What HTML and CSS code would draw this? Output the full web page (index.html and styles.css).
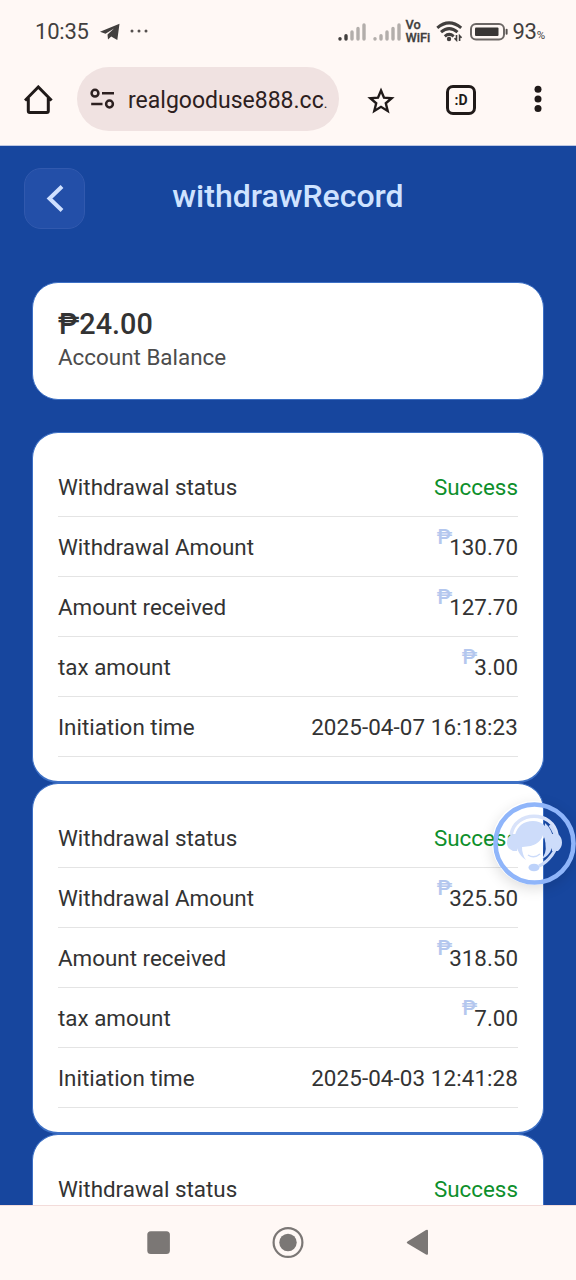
FILE: index.html
```html
<!DOCTYPE html>
<html lang="en">
<head>
<meta charset="utf-8">
<title>withdrawRecord</title>
<link rel="stylesheet" href="styles.css">
</head>
<body>
<div class="phone">
  <header class="status-bar">
    <span class="clock">10:35</span>
    <svg class="telegram" width="20" height="18" viewBox="0 0 20 18"><path d="M0 8.800 19.500 .8 17.300 17 11.200 13.500 8 16.500 7.500 11.500 14 5.500 5.500 10.700Z" fill="#423f3e"/></svg>
    <svg class="ellipsis" width="18" height="4" viewBox="0 0 18 4" fill="#55504e"><circle cx="2" cy="2" r="1.500"/><circle cx="9" cy="2" r="1.500"/><circle cx="16" cy="2" r="1.500"/></svg>
    <div class="indicators">
      <svg class="signal" width="28" height="18" viewBox="0 0 28 18"><g stroke-width="3.400" stroke-linecap="round"><path stroke="#423f3e" d="M2 15.600v.4M8 12.700v3.300"/><path stroke="#b3aeab" d="M14 9v7M20 5.500v10.500M26 2v14"/></g></svg>
      <svg class="signal-two" width="28" height="18" viewBox="0 0 28 18"><path stroke-width="3.400" stroke-linecap="round" stroke="#b3aeab" d="M2 15.600v.4M8 12.700v3.300M14 9v7M20 5.500v10.500M26 2v14"/></svg>
      <span class="vowifi"><span>Vo</span><span>WiFi</span></span>
      <svg class="wifi" width="27" height="21" viewBox="0 0 27 21"><g fill="none" stroke="#423f3e" stroke-width="3"><path d="M1.300 6.800Q13 -3 25.200 6.800"/><path d="M5 11.200Q13.200 4 21.500 11.200"/><path d="M8.800 15.300Q13.200 11.500 17.700 15.300"/></g><circle cx="13" cy="18" r="2.200" fill="#423f3e"/><path d="M20.500 14v5.200l-2-2M23.600 20v-5.200l2 2" fill="none" stroke="#423f3e" stroke-width="1.600"/></svg>
      <svg class="battery" width="38" height="18" viewBox="0 0 38 18"><rect x="1" y="1" width="33" height="15.600" rx="5" fill="none" stroke="#6c6765" stroke-width="2"/><rect x="5" y="4.500" width="23.500" height="8.600" rx="1" fill="#393635"/><path d="M36.600 6.800v4" stroke="#55504e" stroke-width="2" stroke-linecap="round"/></svg>
      <span class="percent">93<small>%</small></span>
    </div>
  </header>
  <nav class="browser-bar">
    <svg class="home" width="30" height="30" viewBox="0 0 30 30"><path d="M1 15.500 14.300 2 27.600 15.500M4.300 13V26Q4.300 27.500 5.800 27.500H22.800Q24.300 27.500 24.300 26V13" fill="none" stroke="#201a19" stroke-width="3"/></svg>
    <div class="address">
      <svg width="26" height="22" viewBox="0 0 26 22"><g fill="none" stroke="#2c2020" stroke-width="2.500"><circle cx="5" cy="5.200" r="3.400"/><path d="M12 5.200H24M1.200 16H12.500"/><circle cx="19.500" cy="16" r="3.400"/></g></svg>
      <span class="url">realgooduse888.cc<small>.</small></span>
    </div>
    <svg class="star" width="28" height="28" viewBox="0 0 28 28"><path d="M14 3.500 17 10.600 24.700 11.200 18.800 16.300 20.700 23.900 14 19.800 7.300 23.900 9.200 16.300 3.300 11.200 11 10.600Z" fill="none" stroke="#201a19" stroke-width="2.400"/></svg>
    <span class="tabs">:D</span>
    <svg class="more" width="8" height="28" viewBox="0 0 8 28" fill="#201a19"><circle cx="4" cy="4.300" r="3.500"/><circle cx="4" cy="14" r="3.500"/><circle cx="4" cy="23.500" r="3.500"/></svg>
  </nav>
  <main class="page">
    <div class="page-header">
      <div class="back"><svg width="20" height="30" viewBox="0 0 20 30"><path d="M17 2.500 4.500 14.500 17 26.500" fill="none" stroke="#cfe0ff" stroke-width="4"/></svg></div>
      <h1 class="title">withdrawRecord</h1>
    </div>
    <section class="balance">
      <div class="balance-value">₱24.00</div>
      <div class="balance-label">Account Balance</div>
    </section>
    <section class="record">
      <div class="row"><span>Withdrawal status</span><span class="success">Success</span></div>
      <div class="row"><span>Withdrawal Amount</span><span class="amount"><i>₱</i>130.70</span></div>
      <div class="row"><span>Amount received</span><span class="amount"><i>₱</i>127.70</span></div>
      <div class="row"><span>tax amount</span><span class="amount"><i>₱</i>3.00</span></div>
      <div class="row"><span>Initiation time</span><span class="time">2025-04-07 16:18:23</span></div>
    </section>
    <section class="record">
      <div class="row"><span>Withdrawal status</span><span class="success">Success</span></div>
      <div class="row"><span>Withdrawal Amount</span><span class="amount"><i>₱</i>325.50</span></div>
      <div class="row"><span>Amount received</span><span class="amount"><i>₱</i>318.50</span></div>
      <div class="row"><span>tax amount</span><span class="amount"><i>₱</i>7.00</span></div>
      <div class="row"><span>Initiation time</span><span class="time">2025-04-03 12:41:28</span></div>
    </section>
    <section class="record">
      <div class="row"><span>Withdrawal status</span><span class="success">Success</span></div>
    </section>
  </main>
  <footer class="system-nav">
    <svg width="24" height="24" viewBox="0 0 24 24"><rect x="1.300" y=".3" width="22.600" height="22.600" rx="3.500" fill="#7b7775"/></svg>
    <svg width="32" height="32" viewBox="0 0 32 32"><circle cx="16" cy="15.500" r="14.400" fill="none" stroke="#7b7775" stroke-width="2.200"/><circle cx="16" cy="15.500" r="8.700" fill="#7b7775"/></svg>
    <svg width="24" height="28" viewBox="0 0 24 28"><path d="M2.500 12.500 21 1Q23 0 23 2V24.500Q23 26.500 21 25.500L2.500 14.500Q.8 13.500 2.500 12.500Z" fill="#7b7775"/></svg>
  </footer>
  <div class="support">
    <svg width="84" height="84" viewBox="0 0 84 84">
      <path d="M24 26H51V62H30Q24 50 24 26Z" fill="#fff"/>
      <circle cx="42.500" cy="42.500" r="39" fill="none" stroke="#8fb5fa" stroke-width="4.600"/>
      <path d="M19 34C23 9 61 9 65 34" fill="none" stroke="#d9e3fa" stroke-width="3.500"/>
      <path d="M58 24Q70 41 60 54Q54 62 47 65" fill="none" stroke="#cddcfa" stroke-width="3.200"/>
      <path d="M53 22Q64 32 60 47Q57 55 50 58Q55 48 52 36Z" fill="#cddcfa"/>
      <path d="M23 34Q27 20 41 20Q54 20 57 34L52 37Q46 46 31 46Q29 52 34 59Q23 52 23 34Z" fill="#cddcfa"/>
      <path d="M30 46Q47 46 51 34V57Q41 62 34 56Q30 52 30 46Z" fill="#fff"/>
      <path d="M52 36Q56 49 51 56Z" fill="#17469e"/>
      <path d="M36 54Q42 58 48 53" fill="none" stroke="#cddcfa" stroke-width="1.500"/>
      <path d="M25 33v17h-4q-6-2-6-8.500t6-8.500ZM60 33h6q4 3.500 4 8.500t-4 8.500h-6Z" fill="#cddcfa"/>
      <ellipse cx="42" cy="66.500" rx="5.500" ry="3.800" fill="#bdd2fa"/>
    </svg>
  </div>
</div>
</body>
</html>
```
FILE: styles.css
```css
* { box-sizing: border-box; }
body { margin: 0; font-family: Roboto, "Noto Sans", sans-serif; background: #fff8f5; }
svg { display: block; flex: none; }
.phone { position: relative; width: 576px; height: 1280px; overflow: hidden; display: flex; flex-direction: column; background: #fff8f5; }
.status-bar { height: 62px; flex: none; display: flex; align-items: center; padding: 1px 31px 0 35px; color: #423f3e; }
.clock { font-size: 22px; letter-spacing: -.2px; width: 65px; }
.ellipsis { margin: -2px 0 0 10px; }
.indicators { margin-left: auto; display: flex; align-items: center; }
.signal { margin-right: 7px; }
.signal, .signal-two { position: relative; left: 1px; }
.vowifi { display: flex; flex-direction: column; font-size: 12.800px; line-height: 13px; font-weight: 500; -webkit-text-stroke: .3px #423f3e; margin: 0 0 1px 5px; width: 25px; }
.wifi { margin-left: 6px; }
.battery { margin-left: 7px; }
.percent { font-size: 22px; margin-left: 4px; white-space: nowrap; letter-spacing: -.2px; }
.percent small { font-size: 11.500px; }
.browser-bar { height: 84px; flex: none; display: flex; align-items: center; padding: 0 34px 9px 24px; border-bottom: 1px solid #bfc8e2; }
.home { margin-top: 2px; }
.address { width: 262px; height: 64px; border-radius: 32px; background: #f0e2e1; margin-left: 23px; padding-left: 13px; display: flex; align-items: center; color: #2c2020; }
.url { font-size: 23px; margin: 2px 0 0 12px; white-space: nowrap; }
.url small { font-size: 14px; }
.star { margin: 3px 0 0 28px; }
.tabs { width: 30px; height: 30px; border: 3px solid #201a19; border-radius: 7px; margin: 1px 0 0 51px; font-size: 14px; font-weight: 700; display: flex; align-items: center; justify-content: center; color: #201a19; }
.more { margin: 0 0 0 58px; }
.page { flex: 1; min-height: 0; overflow: hidden; background: #17469e; padding: 0 32px; color: #333; font-size: 22.4px; }
.page-header { height: 136px; display: flex; justify-content: center; padding-top: 22px; position: relative; }
.back { position: absolute; left: -8px; top: 22px; width: 61px; height: 61px; border-radius: 17px; background: #234fa8; border: 1px solid #3159ae; display: flex; align-items: center; justify-content: center; }
.title { margin: 9px 0 0; font-size: 32px; line-height: 38px; font-weight: 500; color: #cfe3ff; }
.balance, .record { background: #fff; border: 1px solid #3d70c5; border-radius: 26px; }
.balance { height: 118px; padding: 24px 25px; }
.balance-value { font-size: 28.800px; line-height: 34px; font-weight: 500; }
.balance-label { line-height: 33px; color: #4c4c4c; }
.record { height: 351px; padding: 24px 25px; border-bottom-width: 2px; }
.balance + .record { margin-top: 32px; }
.row { height: 60px; border-bottom: 1px solid #e4e4e4; display: flex; align-items: center; justify-content: space-between; white-space: nowrap; }
.time { letter-spacing: .1px; }
.success { color: #0d8f2b; }
.amount { display: flex; align-items: center; }
.amount i { font-style: normal; font-size: 21px; line-height: 24px; font-weight: 500; color: #b4c7ee; margin: -19px -3px 0 0; }
.system-nav { height: 75px; flex: none; border-top: 1px solid #f3dcda; display: flex; align-items: center; justify-content: space-between; padding: 0 147px 0 146px; }
.support { position: absolute; left: 492px; top: 801px; width: 84px; height: 84px; border-radius: 50%; box-shadow: 0 4px 14px #0002; }
```
